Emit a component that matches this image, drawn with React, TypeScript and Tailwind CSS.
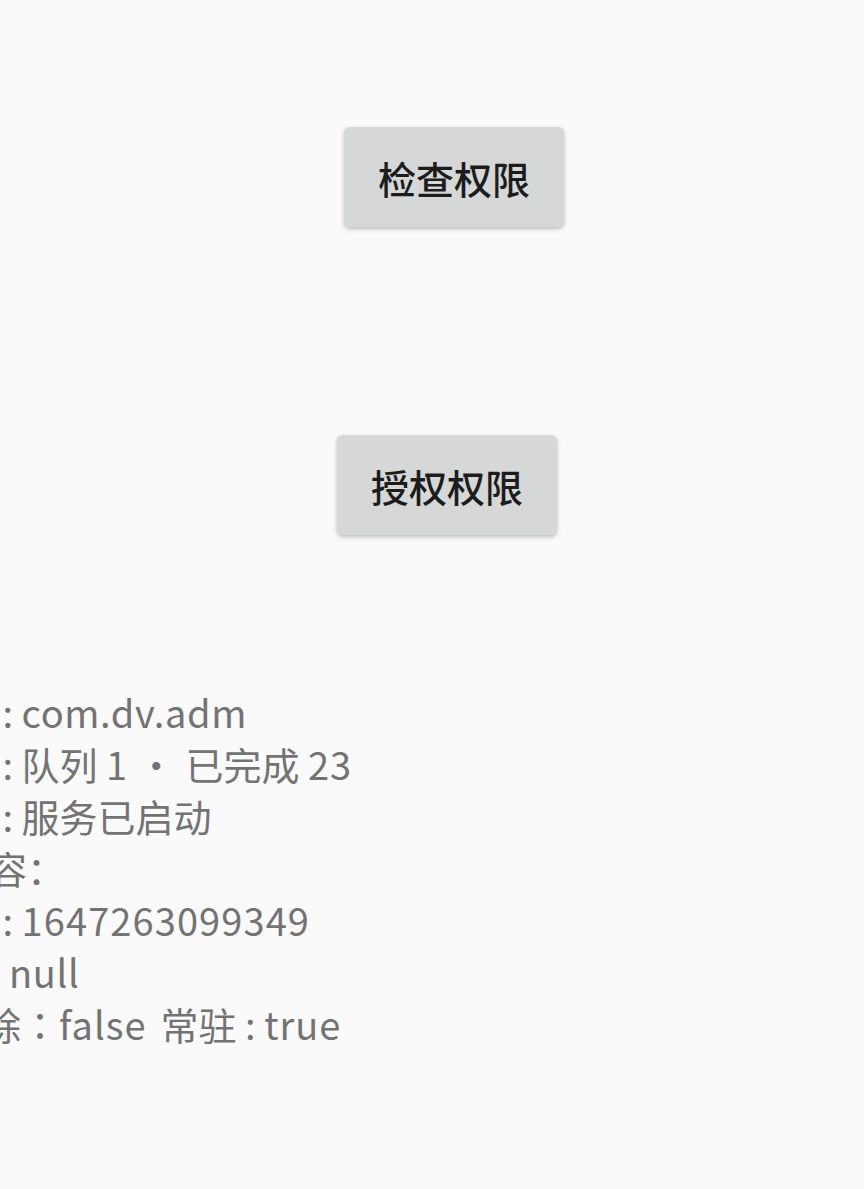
function Button({ label, offset }: { label: string; offset: string }) {
  return (
    <button
      className={`flex h-[100px] w-[220px] items-center justify-center rounded-[6px] bg-[#d6d7d7] text-[38px] font-medium text-[#1c1c1c] shadow-[0_2px_4px_rgba(0,0,0,0.25)] ${offset}`}
    >
      {label}
    </button>
  );
}

export default function App() {
  return (
    <div className="flex h-[1189px] w-full flex-col overflow-hidden bg-[#fafafa] font-['Noto_Sans_CJK_SC',sans-serif]">
      <div className="pt-[127px]">
        <Button label="检查权限" offset="ml-[344px]" />
      </div>
      <div className="pt-[208px]">
        <Button label="授权权限" offset="ml-[337px]" />
      </div>
      {/* info text is wider than the screen, its labels run off the left edge */}
      <div className="flex flex-col pt-[151px] text-[38px] leading-[52px] text-[#737373]">
        <span className="-ml-[158px] whitespace-nowrap">
          应用包名 : <span className="tracking-[0.6px]">com.dv.adm</span>
        </span>
        <span className="-ml-[158px] whitespace-nowrap">
          下载状态 : 队列 <span className="tracking-[0.8px]">1 · </span>已完成 <span className="tracking-[1px]">23</span>
        </span>
        <span className="-ml-[158px] whitespace-nowrap">服务状态 : 服务已启动</span>
        <span className="-ml-[125px] whitespace-nowrap">通知内容：</span>
        <span className="-ml-[158px] whitespace-nowrap">
          通知时间 : <span className="tracking-[1.1px]">1647263099349</span>
        </span>
        <span className="-ml-[162px] whitespace-nowrap">
          通知标题: <span className="tracking-[0.6px]">null</span>
        </span>
        <span className="-ml-[169px] whitespace-nowrap">
          是否可清除<span className="font-['Noto_Sans_CJK_TC',sans-serif]">：</span>
          <span className="tracking-[1px]">false</span>
          <span className="ml-[14px]">常驻 : </span>
          <span className="tracking-[1px]">true</span>
        </span>
      </div>
    </div>
  );
}
